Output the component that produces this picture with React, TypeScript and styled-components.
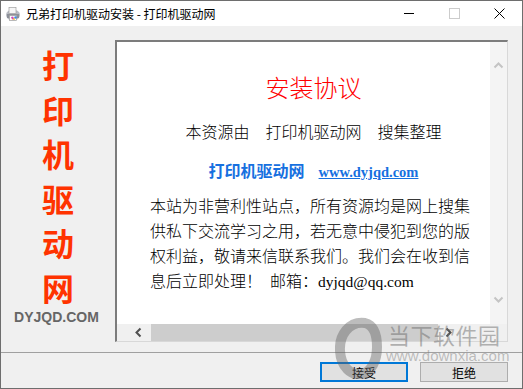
import React from 'react';
import styled, { createGlobalStyle } from 'styled-components';

const cjk = `"Noto Sans CJK SC", "Noto Sans", sans-serif`;

const GlobalStyle = createGlobalStyle`
  html, body {
    margin: 0;
    padding: 0;
    background: #ffffff;
  }
  body {
    font-family: ${cjk};
  }
`;

const sideChars = ['打', '印', '机', '驱', '动', '网'];

const paragraph = [
  '本站为非营利性站点，所有资源均是网上搜集',
  '供私下交流学习之用，若无意中侵犯到您的版',
  '权利益，敬请来信联系我们。我们会在收到信',
];

function AppIcon() {
  return (
    <svg width="16" height="16" viewBox="0 0 16 16">
      <ellipse cx="8" cy="9" rx="7" ry="5.5" fill="#b9bcc4" />
      <rect x="4" y="1.5" width="7" height="6" fill="#f6f6f6" stroke="#a0a0a0" strokeWidth="0.7" />
      <path d="M2 8 L14 8 L14 12 L2 12 Z" fill="#8d9099" />
      <rect x="4.5" y="9.5" width="7" height="5" fill="#ffffff" stroke="#a0a0a0" strokeWidth="0.7" />
      <path d="M6 11 L8 10.5 L9.5 13 L7 13.5 Z" fill="#d04ab8" />
      <circle cx="10.5" cy="11.5" r="1.2" fill="#3a8ee6" />
      <circle cx="9" cy="13" r="0.9" fill="#f2c230" />
    </svg>
  );
}

function Chevron({ dir }: { dir: 'up' | 'down' | 'left' | 'right' }) {
  const rot = { up: 0, right: 90, down: 180, left: 270 }[dir];
  return (
    <svg width="11" height="11" viewBox="0 0 11 11" style={{ transform: `rotate(${rot}deg)` }}>
      <path d="M1.5 7.5 L5.5 3.5 L9.5 7.5" fill="none" stroke="currentColor" strokeWidth="2" />
    </svg>
  );
}

export default function App() {
  return (
    <>
      <GlobalStyle />
      <Window>
        <TitleBar>
          <AppIcon />
          <TitleText>兄弟打印机驱动安装 - 打印机驱动网</TitleText>
          <Controls>
            <ControlButton>
              <svg width="11" height="11" viewBox="0 0 11 11">
                <path d="M0 5.5 H10" stroke="#000" strokeWidth="1" />
              </svg>
            </ControlButton>
            <ControlButton>
              <svg width="11" height="11" viewBox="0 0 11 11">
                <rect x="0.5" y="0.5" width="10" height="10" fill="none" stroke="#cccccc" strokeWidth="1" />
              </svg>
            </ControlButton>
            <ControlButton>
              <svg width="11" height="11" viewBox="0 0 11 11">
                <path d="M0.5 0.5 L10.5 10.5 M10.5 0.5 L0.5 10.5" stroke="#000" strokeWidth="1" />
              </svg>
            </ControlButton>
          </Controls>
        </TitleBar>

        <Body>
          <Main>
            <Side>
              {sideChars.map((c) => (
                <BigChar key={c}>{c}</BigChar>
              ))}
              <SiteMark>DYJQD.COM</SiteMark>
            </Side>

            <Frame>
              <Content>
                <Heading>安装协议</Heading>
                <SourceLine>本资源由　打印机驱动网　搜集整理</SourceLine>
                <LinkLine>
                  <SiteName>打印机驱动网</SiteName>
                  <SiteUrl>www.dyjqd.com</SiteUrl>
                </LinkLine>
                <Para>
                  {paragraph.map((l) => (
                    <ParaLine key={l}>{l}</ParaLine>
                  ))}
                  <ParaLine>
                    息后立即处理！{'\u2002'}邮箱：<Email>dyjqd@qq.com</Email>
                  </ParaLine>
                </Para>
              </Content>
              <VScroll>
                <ArrowBox $disabled>
                  <Chevron dir="up" />
                </ArrowBox>
                <ArrowBox $disabled>
                  <Chevron dir="down" />
                </ArrowBox>
              </VScroll>
              <HScroll>
                <ArrowBox>
                  <Chevron dir="left" />
                </ArrowBox>
                <Thumb />
                <ArrowBox>
                  <Chevron dir="right" />
                </ArrowBox>
              </HScroll>
              <Corner />
            </Frame>
          </Main>

          <Footer>
            <DialogButton $primary>接受</DialogButton>
            <DialogButton>拒绝</DialogButton>
          </Footer>
        </Body>

        <Watermark>
          <svg width="50" height="62" viewBox="0 0 50 62">
            <path
              d="M30 6 C14 4 4 18 5 34 C6 50 16 59 27 57 C36 55 42 44 42 30 C42 17 38 8 30 6 Z"
              fill="none"
              stroke="rgba(95,95,95,0.42)"
              strokeWidth="10"
            />
          </svg>
          <MarkText>
            <MarkName>当下软件园</MarkName>
            <MarkUrl>www.downxia.com</MarkUrl>
          </MarkText>
        </Watermark>
      </Window>
    </>
  );
}

const Window = styled.div`
  position: relative;
  width: 523px;
  height: 389px;
  box-sizing: border-box;
  border: 1px solid #6e6e6e;
  display: flex;
  flex-direction: column;
  overflow: hidden;
  font-family: ${cjk};
`;

const TitleBar = styled.div`
  height: 25px;
  flex: none;
  background: #ffffff;
  display: flex;
  align-items: center;
  padding-left: 4px;
`;

const TitleText = styled.span`
  margin-left: 5px;
  font-size: 12px;
  color: #000000;
  line-height: 25px;
`;

const Controls = styled.div`
  margin-left: auto;
  display: flex;
  height: 100%;
`;

const ControlButton = styled.div`
  width: 45px;
  height: 100%;
  display: flex;
  align-items: center;
  justify-content: center;
`;

const Body = styled.div`
  flex: 1;
  background: #f0f0f0;
  display: flex;
  flex-direction: column;
`;

const Main = styled.div`
  height: 326px;
  flex: none;
  display: flex;
`;

const Side = styled.div`
  width: 114px;
  flex: none;
  display: flex;
  flex-direction: column;
  align-items: center;
  padding-top: 16px;
  box-sizing: border-box;
`;

const BigChar = styled.div`
  font-size: 32px;
  line-height: 44.5px;
  font-weight: 700;
  color: #ff3300;
`;

const SiteMark = styled.div`
  font-family: "Liberation Sans", Arial, sans-serif;
  font-weight: 700;
  font-size: 14px;
  line-height: 16px;
  color: #666666;
  margin-left: -3px;
`;

const Frame = styled.div`
  margin-top: 14px;
  width: 393px;
  height: 302px;
  box-sizing: border-box;
  border-top: 2px solid #7c7c7c;
  border-left: 2px solid #7c7c7c;
  border-right: 1px solid #d8d8d8;
  border-bottom: 1px solid #d8d8d8;
  display: grid;
  grid-template-columns: 373px 17px;
  grid-template-rows: 282px 17px;
`;

const Content = styled.div`
  background: #ffffff;
  display: flex;
  flex-direction: column;
  align-items: center;
  padding: 30px 0 0 20px;
  box-sizing: border-box;
  overflow: hidden;
`;

const Heading = styled.div`
  font-size: 24px;
  line-height: 30px;
  font-weight: 300;
  color: #ff0000;
`;

const SourceLine = styled.div`
  margin-top: 17px;
  font-size: 16px;
  line-height: 24px;
  font-weight: 300;
  color: #000000;
  white-space: nowrap;
`;

const LinkLine = styled.div`
  margin-top: 15px;
  line-height: 24px;
  display: flex;
  align-items: baseline;
  white-space: nowrap;
`;

const SiteName = styled.span`
  font-size: 16px;
  font-weight: 700;
  color: #1670e0;
`;

const SiteUrl = styled.span`
  margin-left: 14px;
  font-family: "Liberation Serif", "Times New Roman", serif;
  font-size: 14.5px;
  font-weight: 700;
  color: #1670e0;
  text-decoration: underline;
`;

const Para = styled.div`
  align-self: flex-start;
  margin: 9px 0 0 13px;
  width: 320px;
`;

const ParaLine = styled.div`
  font-size: 16px;
  line-height: 25px;
  font-weight: 300;
  color: #000000;
  white-space: nowrap;
`;

const Email = styled.span`
  font-family: "Liberation Serif", "Times New Roman", serif;
  font-size: 15.5px;
  font-weight: 400;
`;

const VScroll = styled.div`
  background: #f4f4f4;
  display: flex;
  flex-direction: column;
  justify-content: space-between;
  align-items: center;
  padding: 15px 0 16px;
`;

const ArrowBox = styled.div<{ $disabled?: boolean }>`
  width: 17px;
  height: 17px;
  flex: none;
  display: flex;
  align-items: center;
  justify-content: center;
  color: ${(p) => (p.$disabled ? '#c4c4c4' : '#505050')};
`;

const HScroll = styled.div`
  background: #f0f0f0;
  display: flex;
  align-items: stretch;
  padding-left: 13px;
`;

const Thumb = styled.div`
  width: 287px;
  margin: 0 2px 0 4px;
  background: #cdcdcd;
`;

const Corner = styled.div`
  background: #f0f0f0;
`;

const Footer = styled.div`
  flex: 1;
  border-top: 1px solid #a0a0a0;
  display: flex;
  justify-content: flex-end;
  align-items: flex-start;
  gap: 12px;
  padding: 9px 14px 0 0;
`;

const DialogButton = styled.div<{ $primary?: boolean }>`
  width: 88px;
  height: 20px;
  box-sizing: border-box;
  background: #e1e1e1;
  border: ${(p) => (p.$primary ? '2px solid #0078d7' : '1px solid #adadad')};
  display: flex;
  align-items: center;
  justify-content: center;
  font-size: 12px;
  color: #000000;
`;

const Watermark = styled.div`
  position: absolute;
  left: 334px;
  top: 316px;
  display: flex;
  align-items: flex-start;
  pointer-events: none;
`;

const MarkText = styled.div`
  display: flex;
  flex-direction: column;
  margin-left: 3px;
  padding-top: 6px;
`;

const MarkName = styled.div`
  font-size: 22px;
  line-height: 22px;
  letter-spacing: 0.5px;
  color: rgba(110, 110, 110, 0.5);
`;

const MarkUrl = styled.div`
  font-family: "Liberation Sans", Arial, sans-serif;
  font-size: 15px;
  line-height: 14px;
  margin-top: 4px;
  color: rgba(120, 120, 120, 0.45);
  margin-left: -2px;
`;
